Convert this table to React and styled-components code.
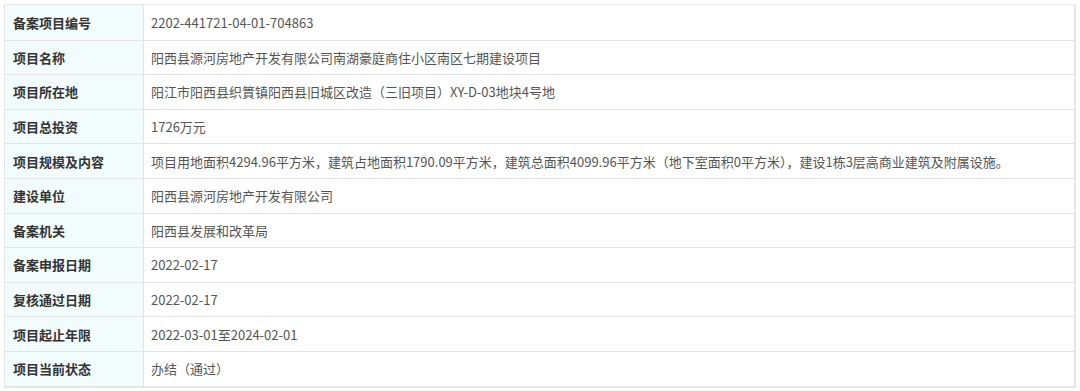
import styled, { createGlobalStyle } from "styled-components";

const GlobalStyle = createGlobalStyle`
  html, body {
    margin: 0;
    padding: 0;
    background: #fff;
  }
  body {
    font-family: "Noto Sans CJK SC", "Noto Sans", sans-serif;
  }
`;

const Page = styled.div`
  padding: 4px 4px 0 4px;
  width: 1072px;
`;

const Table = styled.div`
  display: grid;
  grid-template-columns: 139px 1fr;
  border: 1px solid #e6e6e6;
  border-bottom: 2px solid #e6e6e6;
  border-right: 2px solid #e6e6e6;
`;

const Label = styled.div`
  height: 34.6px;
  box-sizing: border-box;
  display: flex;
  align-items: center;
  padding-left: 8px;
  background: #f3fcfd;
  border-right: 1px solid #e3e3e3;
  border-top: ${(p) => (p.$first ? "none" : "1px solid #e3e3e3")};
  font-size: 13px;
  font-weight: 700;
  color: #333;
`;

const Value = styled.div`
  height: 34.6px;
  box-sizing: border-box;
  display: flex;
  align-items: center;
  padding-left: 7px;
  border-top: ${(p) => (p.$first ? "none" : "1px solid #e3e3e3")};
  font-size: 13px;
  color: #555;
  white-space: nowrap;
`;

const rows = [
  ["备案项目编号", "2202-441721-04-01-704863"],
  ["项目名称", "阳西县源河房地产开发有限公司南湖豪庭商住小区南区七期建设项目"],
  ["项目所在地", "阳江市阳西县织篢镇阳西县旧城区改造（三旧项目）XY-D-03地块4号地"],
  ["项目总投资", "1726万元"],
  [
    "项目规模及内容",
    "项目用地面积4294.96平方米，建筑占地面积1790.09平方米，建筑总面积4099.96平方米（地下室面积0平方米），建设1栋3层高商业建筑及附属设施。",
  ],
  ["建设单位", "阳西县源河房地产开发有限公司"],
  ["备案机关", "阳西县发展和改革局"],
  ["备案申报日期", "2022-02-17"],
  ["复核通过日期", "2022-02-17"],
  ["项目起止年限", "2022-03-01至2024-02-01"],
  ["项目当前状态", "办结（通过）"],
];

export default function App() {
  return (
    <>
      <GlobalStyle />
      <Page>
        <Table>
          {rows.map(([k, v], i) => (
            <>
              <Label key={k} $first={i === 0}>{k}</Label>
              <Value key={k + "v"} $first={i === 0}>{v}</Value>
            </>
          ))}
        </Table>
      </Page>
    </>
  );
}
